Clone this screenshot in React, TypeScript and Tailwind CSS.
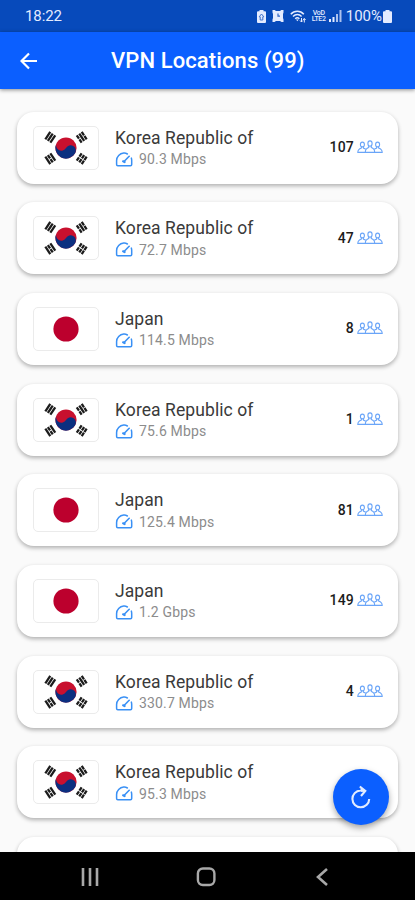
import type { ReactNode } from 'react';

type Country = 'KR' | 'JP';

interface Location {
  country: Country;
  speed: string;
  users: number;
}

const COUNTRY_NAMES: Record<Country, string> = {
  KR: 'Korea Republic of',
  JP: 'Japan',
};

const LOCATIONS: Location[] = [
  { country: 'KR', speed: '90.3 Mbps', users: 107 },
  { country: 'KR', speed: '72.7 Mbps', users: 47 },
  { country: 'JP', speed: '114.5 Mbps', users: 8 },
  { country: 'KR', speed: '75.6 Mbps', users: 1 },
  { country: 'JP', speed: '125.4 Mbps', users: 81 },
  { country: 'JP', speed: '1.2 Gbps', users: 149 },
  { country: 'KR', speed: '330.7 Mbps', users: 4 },
  { country: 'KR', speed: '95.3 Mbps', users: 0 },
];

// Bars of each trigram from the outside in, true = broken bar
const TRIGRAMS = [
  { x: -15.7, y: -10.7, angle: -56, bars: [false, false, false] },
  { x: 15.7, y: -10.7, angle: 56, bars: [true, false, true] },
  { x: -15.7, y: 10.7, angle: 56, bars: [false, true, false] },
  { x: 15.7, y: 10.7, angle: -56, bars: [true, true, true] },
];

function KoreaFlag() {
  return (
    <svg viewBox="-32 -21 64 42" className="w-16 h-[42px]">
      {TRIGRAMS.map((t) => (
        <g key={`${t.x}${t.y}`} transform={`translate(${t.x} ${t.y}) rotate(${t.angle})`} stroke="#1c1c1c" strokeWidth="2.3">
          {t.bars.map((broken, i) => (
            <path key={i} d={`M-4.4 ${(i - 1) * 3}h8.8`} strokeDasharray={broken ? '4 0.8' : undefined} />
          ))}
        </g>
      ))}
      <circle r="10.6" fill="#c8102e" />
      <g transform="rotate(30)">
        <path d="M-10.6 0a5.3 5.3 0 0 0 10.6 0a5.3 5.3 0 0 1 10.6 0a10.6 10.6 0 0 1-21.2 0z" fill="#0b2f80" />
      </g>
    </svg>
  );
}

function JapanFlag() {
  return (
    <svg viewBox="-32 -21 64 42" className="w-16 h-[42px]">
      <circle r="12.6" fill="#bc002d" />
    </svg>
  );
}

function SpeedIcon() {
  return (
    <svg viewBox="0 0 18 15" className="w-[18px] h-[15px]" fill="none" stroke="#3990f5" strokeWidth="1.5" strokeLinecap="round" strokeLinejoin="round">
      <path d="M12.4 2C11 1.200 9.800 1 8.700 1.100 4.700 1.400 1.600 4.600 1.600 8.500v4.100c0 .8.4 1.200 1.200 1.200h12.700c.8 0 1.200-.4 1.200-1.200V8.500c0-.8-.1-1.600-.4-2.400" />
      <path d="M9 9.500l5.200-5.200" strokeWidth="1.6" />
      <path d="M8.100 9.300l1.500.7" strokeWidth="2.2" />
    </svg>
  );
}

function UsersIcon() {
  return (
    <svg viewBox="0 0 26 14" className="w-[26px] h-3.5" fill="none" stroke="#6aa5f8" strokeWidth="1.1">
      <ellipse cx="13" cy="3.6" rx="2.1" ry="2.7" />
      <ellipse cx="5.4" cy="4.5" rx="2" ry="2.4" />
      <ellipse cx="20.6" cy="4.5" rx="2" ry="2.4" />
      <path d="M8.3 12.4c0-3 1.2-4 3.4-4.8V6m2.6 0v1.6c2.2.8 3.4 1.8 3.4 4.8" />
      <path d="M4.4 6.8v1.3C2.1 8.9.8 9.8.8 12.4h24.4c0-2.6-1.3-3.5-3.6-4.3V6.800M6.400 6.800v1.300l2.500 1.100M19.600 6.800v1.300l-2.500 1.100" />
    </svg>
  );
}

function StatusBar() {
  return (
    <div className="h-8 shrink-0 bg-[#074abb] pl-[25px] pr-[23px] flex items-center justify-between text-[#e4ebff]">
      <span className="text-[15px] leading-8 tracking-[-0.1px]">18:22</span>
      <div className="flex items-center">
        <svg viewBox="0 0 9 13" className="w-[9px] h-[13px] mr-1.5">
          <path d="M2.5 0h4v1.3H8q1 0 1 1V12q0 1-1 1H1q-1 0-1-1V2.3q0-1 1-1h1.5z" fill="currentColor" />
          <path d="M4.5 4L2.2 6.8h1V10h2.6V6.8h1z" fill="none" stroke="#3e71ca" />
        </svg>
        <svg viewBox="0 0 12 12" className="w-3 h-3 mr-1.5">
          <path d="M.5 0h2.200l1.300 1h4l1.300-1h2.200v2.500L11 4v4l.5 1.500V12H9.500l-1.500-1H4l-1.500 1H.5V9.500L1 8V4L.5 2.500z" fill="currentColor" />
          <path d="M6 3.500v2.700h2" fill="none" stroke="#2f65c5" strokeWidth="1.2" />
        </svg>
        <svg viewBox="0 0 16 13" className="w-4 h-[13px] mr-[5px]" fill="none" stroke="currentColor" strokeWidth="1.5">
          <path d="M.8 4.2c3.5-4 9.5-4 13 0M3 6.5c2.500-2.600 6.200-2.600 8.600 0M5.200 8.800c1.300-1.200 2.900-1.200 4.200 0" />
          <path d="M6 9.5h2.8l-1.4 1.7z" fill="currentColor" stroke="none" />
          <path d="M11.5 8v4M10 10.500l1.500 1.500 1.300-1.500M14.300 12.500v-4M13 10l1.300-1.500L15.600 10" strokeWidth="1" />
        </svg>
        <div className="w-4 h-[13px] mr-0.5 flex flex-col items-center text-[7px] leading-[6.5px] font-medium tracking-[-0.3px]">
          <span>VoD</span>
          <span>LTE2</span>
        </div>
        <svg viewBox="0 0 13 12" className="w-[13px] h-3 mr-1" fill="currentColor">
          <path d="M0 9h2v3H0zM3.5 7h2v5h-2z" />
          <path d="M7 4h2v8H7zM10.5 0h2v12h-2z" opacity=".75" />
        </svg>
        <span className="text-[15px] leading-8">100%</span>
        <svg viewBox="0 0 9 13" className="w-[9px] h-[13px] ml-px" fill="currentColor">
          <path d="M2.5 0h4v1.3H8q1 0 1 1V12q0 1-1 1H1q-1 0-1-1V2.3q0-1 1-1h1.5z" />
        </svg>
      </div>
    </div>
  );
}

function Header({ children }: { children: ReactNode }) {
  return (
    <header className="relative z-10 h-[56.5px] shrink-0 bg-[#0b5fff] flex items-center text-white shadow-[0_1px_4px_rgba(0,0,0,0.45)]">
      <svg viewBox="0 0 18 18" className="w-[18px] h-[18px] ml-5 mt-px" fill="none" stroke="currentColor" strokeWidth="2.2">
        <path d="M17 9H2.200M9 1.500L1.500 9 9 16.500" />
      </svg>
      <h1 className="ml-[73px] mt-0.5 text-[22px] leading-7 font-medium tracking-[0.1px] whitespace-nowrap">{children}</h1>
    </header>
  );
}

function LocationCard({ location }: { location: Location }) {
  return (
    <li className="h-[72px] shrink-0 rounded-[17px] bg-white pl-4 pr-[15px] flex items-center shadow-[0_2px_4px_rgba(0,0,0,0.3)]">
      <div className="w-[66px] h-[44px] rounded-[5px] border border-[#ebebeb] flex items-center justify-center">
        {location.country === 'KR' ? <KoreaFlag /> : <JapanFlag />}
      </div>
      <div className="ml-4 mt-px flex-1">
        <p className="text-[17.5px] leading-[22px] tracking-[0.08px] text-[#3a3a3a]">{COUNTRY_NAMES[location.country]}</p>
        <div className="flex items-center gap-[6px] h-[21px]">
          <SpeedIcon />
          <span className="text-[14px] leading-5 tracking-[0.15px] text-[#8c8c8c]">{location.speed}</span>
        </div>
      </div>
      {location.users > 0 && (
        <div className="flex items-center gap-[3px] mb-px">
          <span className="text-[14px] leading-5 font-medium tracking-[0.2px] text-[#1c1c1c]">{location.users}</span>
          <UsersIcon />
        </div>
      )}
    </li>
  );
}

function NavigationBar() {
  return (
    <nav className="h-12 shrink-0 bg-black flex items-center text-[#a8a8a8]">
      <svg viewBox="0 0 18 18" className="w-[18px] h-[18px] ml-[81px] mt-0.5" fill="none" stroke="currentColor" strokeWidth="2.6">
        <path d="M2 0v18M9 0v18M16 0v18" />
      </svg>
      <svg viewBox="0 0 20 20" className="w-5 h-5 ml-[97px] mt-0.5" fill="none" stroke="currentColor" strokeWidth="2.4">
        <rect x="1.9" y="1.5" width="16.5" height="16.5" rx="5" />
      </svg>
      <svg viewBox="0 0 12 18" className="w-3 h-[18px] ml-[100px] mt-0.5" fill="none" stroke="currentColor" strokeWidth="2.6">
        <path d="M11 1L2 9l9 8" />
      </svg>
    </nav>
  );
}

export default function App() {
  return (
    <div className="relative w-[415px] h-[900px] overflow-hidden flex flex-col bg-[#fafafa] font-[Roboto,sans-serif]">
      <StatusBar />
      <Header>VPN Locations (99)</Header>
      <main className="flex-1 min-h-0 overflow-hidden">
        <ul className="pt-[23px] px-[17px] flex flex-col gap-[18.7px]">
          {LOCATIONS.map((location, i) => (
            <LocationCard key={i} location={location} />
          ))}
          <li className="h-[72px] shrink-0 rounded-[17px] bg-white shadow-[0_2px_4px_rgba(0,0,0,0.3)]" />
        </ul>
      </main>
      <NavigationBar />
      <button
        aria-label="Refresh"
        className="absolute right-[26px] bottom-[75px] w-14 h-14 rounded-full bg-[#0b5fff] flex items-center justify-center text-[#e2ecff] shadow-[0_3px_6px_rgba(0,0,0,0.35)]"
      >
        <svg viewBox="0 0 20 24" className="w-5 h-6" fill="none" stroke="currentColor" strokeWidth="2.1">
          <path d="M13.500 5.900C12.200 5.500 10.800 5.400 9.500 5.500A8.400 8.400 0 1 0 18.200 14" />
          <path d="M8.800 1.500L14.300 6l-4.300 5" />
          <path d="M9.500 2.500L14 6l-4 1z" fill="currentColor" stroke="none" />
        </svg>
      </button>
    </div>
  );
}
